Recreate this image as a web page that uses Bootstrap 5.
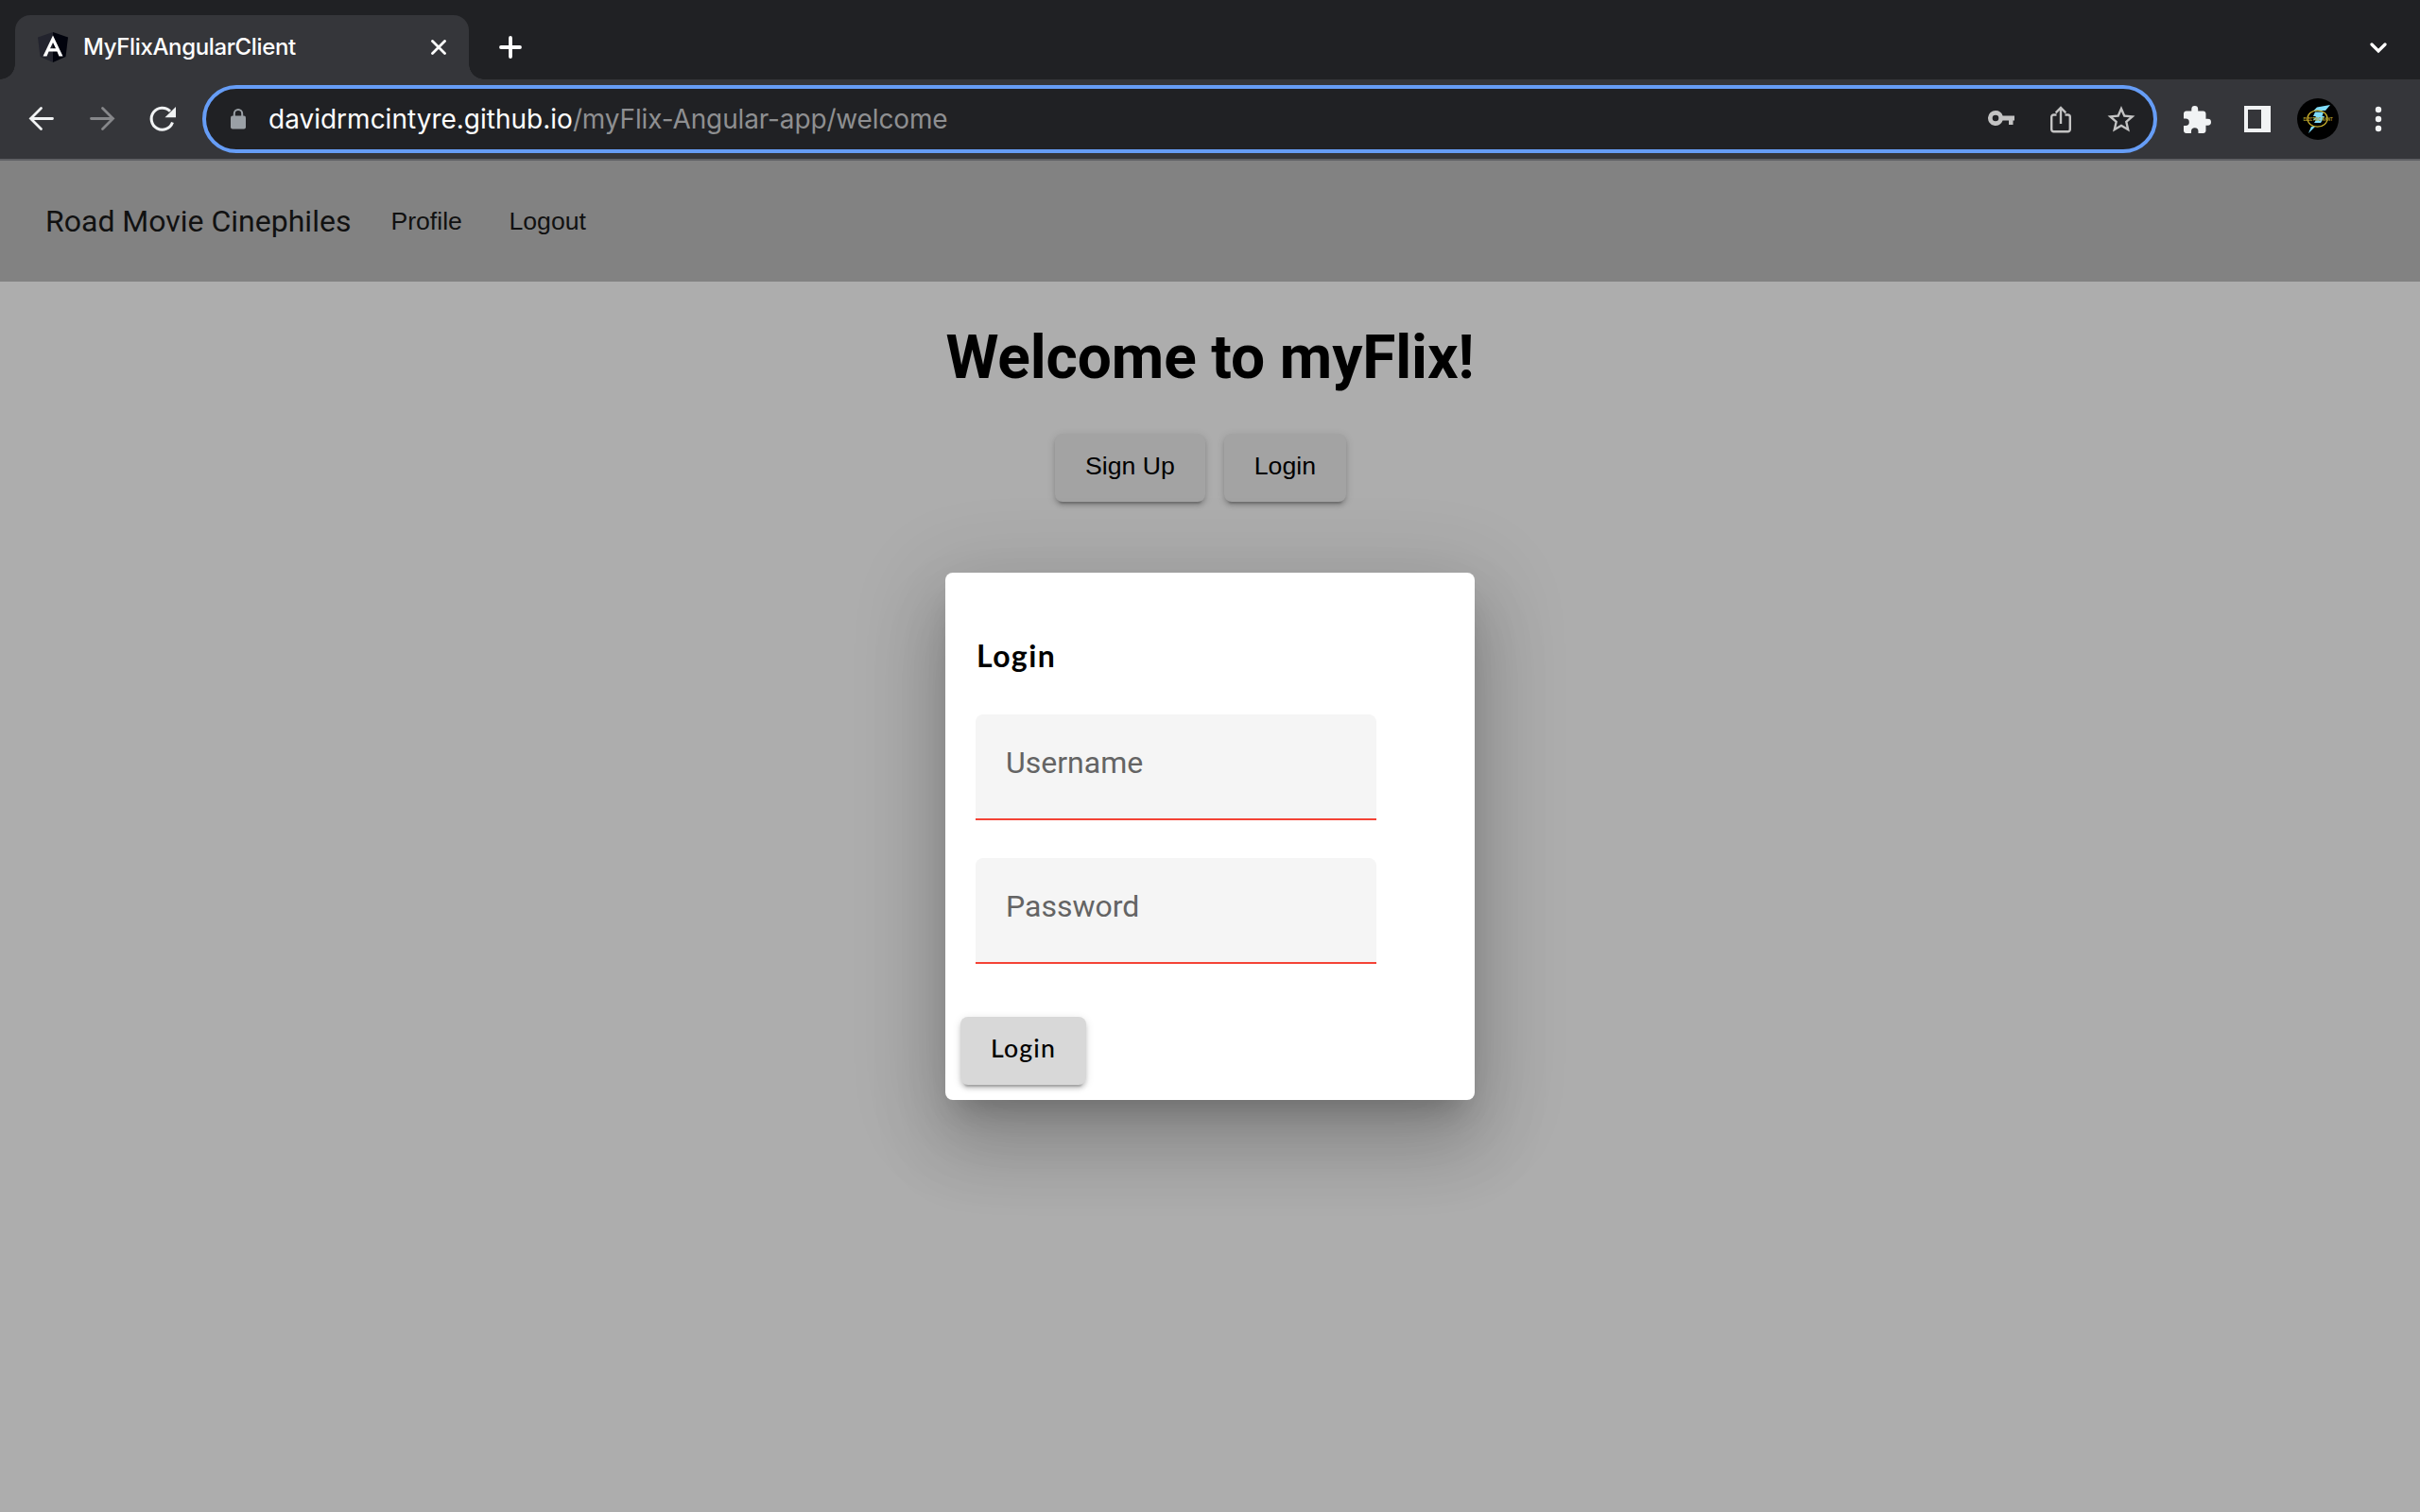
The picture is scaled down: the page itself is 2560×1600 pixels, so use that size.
<!DOCTYPE html>
<html lang="en">
<head>
<meta charset="utf-8">
<title>MyFlixAngularClient</title>
<link href="https://cdn.jsdelivr.net/npm/bootstrap@5.3.0/dist/css/bootstrap.min.css" rel="stylesheet">
<style>
html,body{height:100%}
body{width:2560px;height:1600px;overflow:hidden;background:#adadad;font-family:Roboto,sans-serif;color:#000}
svg{display:block;flex:none}
.tabstrip{height:84px;background:#202124;padding:16px 35px 0 16px}
.tab{width:480px;height:68px;background:#35363a;border-radius:16px 16px 0 0;padding:0 24px;position:relative}
.tab::before,.tab::after{content:"";position:absolute;bottom:0;width:16px;height:16px}
.tab::before{left:-16px;background:radial-gradient(circle at 0 0,transparent 15.5px,#35363a 16px)}
.tab::after{right:-16px;background:radial-gradient(circle at 100% 0,transparent 15.5px,#35363a 16px)}
.tab-title{font:500 24px/32px Inter,sans-serif;letter-spacing:-.36px;color:#fff;margin-left:16px}
.new-tab{margin:22px 0 0 28px}
.toolbar{height:86px;background:#35363a;border-bottom:2px solid #5f6064;padding:0 26px 0 28px}
.nav-icons{gap:32px}
.omnibox{width:2068px;height:72px;border:4px solid #669df6;border-radius:36px;background:#202124;padding:0 19px 0 26px;margin-left:26px}
.omni-icons{gap:35px}
.url{font:400 28px/36px Inter,sans-serif;color:#fff;margin-left:24px}
.url-path{color:#8e8f91;letter-spacing:-.14px}
.puzzle{margin:0 35px 0 28px}
.avatar{margin-left:28px}
.page{height:1430px}
.site-nav{height:128px;background:#828282;padding:0 48px;color:#111}
.brand{font-size:32px;line-height:40px;margin-right:42px}
.nav-btn{font:400 26.67px/32px "Liberation Sans",sans-serif;color:#111;margin-right:49.500px}
.welcome{font-size:64px;font-weight:700;line-height:76px;letter-spacing:-.12px;margin:43px 0 42px}
.actions{gap:20px;padding-right:20px}
.flat-btn{--bs-btn-border-width:0;--bs-btn-border-radius:8px;--bs-btn-color:#000;height:72px;padding:0 32px 4px;font:400 26.67px/68px "Liberation Sans",sans-serif;box-shadow:0 6px 2px -4px rgba(0,0,0,.2),0 4px 4px rgba(0,0,0,.14),0 2px 10px rgba(0,0,0,.12)}
.grey{--bs-btn-bg:#a3a3a3}
.light-grey{--bs-btn-bg:#d8d8d8}
.dialog-card{width:560px;height:558px;border:0;border-radius:8px;padding:0 16px 16px;box-shadow:0 22px 30px -14px rgba(0,0,0,.2),0 48px 76px 6px rgba(0,0,0,.14),0 18px 92px 16px rgba(0,0,0,.12)}
.dialog-title{font:700 32px/40px Lato,sans-serif;letter-spacing:1.4px;margin:68px 16px 42px 17px}
.field{width:424px;height:112px;border:0;border-bottom:2px solid #f44336;border-radius:8px 8px 0 0;background:#f5f5f5!important;padding:0 32px 9px;margin:0 16px 40px;font-size:32px;box-shadow:none!important}
.field::placeholder{color:#646464;opacity:1}
.submit{font-family:Lato,sans-serif;font-weight:500;letter-spacing:1.15px;padding-bottom:6px;line-height:66px}
</style>
</head>
<body>
<header>
  <div class="tabstrip d-flex align-items-start">
    <div class="tab d-flex align-items-center">
      <svg width="32" height="32" viewBox="0 0 32 32"><path fill="#23242e" d="M16 0 0 5.500 2.500 26 16 32z"/><path fill="#01030d" d="M16 0l16 5.500L29.500 26 16 32z"/><path fill="#fff" fill-rule="evenodd" d="M16 3.600 5.500 25.500h4l2.100-5h8.800l2.100 5h4zm0 7.400 3 6.300h-6z"/></svg>
      <span class="tab-title">MyFlixAngularClient</span>
      <svg class="ms-auto" width="16" height="16" viewBox="0 0 16 16" stroke="#fff" stroke-width="2.800" stroke-linecap="round"><path d="M1.500 1.500l13 13M14.500 1.500l-13 13"/></svg>
    </div>
    <svg class="new-tab" width="32" height="24" viewBox="0 0 32 24" stroke="#fff" stroke-width="3.800" stroke-linecap="round"><path d="M6 12h20M16 2v20"/></svg>
    <svg class="ms-auto mt-4" width="18" height="20" viewBox="0 0 18 20" fill="none" stroke="#fff" stroke-width="3.200" stroke-linecap="round"><path d="M2 7l7 7 7-7"/></svg>
  </div>
  <div class="toolbar d-flex align-items-center">
    <div class="nav-icons d-flex align-items-center">
      <svg width="32" height="32" viewBox="0 0 32 32" fill="none" stroke="#f1f3f4" stroke-width="2.800" stroke-linecap="round"><path d="M27.500 15.500h-23M15.500 4.500l-11 11 11 11"/></svg>
      <svg width="32" height="32" viewBox="0 0 32 32" fill="none" stroke="#86878a" stroke-width="2.800" stroke-linecap="round"><path d="M4.500 15.500h23M16.500 4.500l11 11-11 11"/></svg>
      <svg width="32" height="32" viewBox="0 0 32 32"><path d="M26.500 19.500A11.500 11.500 0 1 1 24 7.800" fill="none" stroke="#f1f3f4" stroke-width="3"/><path fill="#f1f3f4" d="M30 3v11.200H18.500z"/></svg>
    </div>
    <div class="omnibox d-flex align-items-center">
      <svg width="16" height="22" viewBox="0 0 16 22"><rect y="7.500" width="16" height="14" rx="2" fill="#9aa0a6"/><path d="M3.800 9V5.200a4.200 4.200 0 0 1 8.400 0V9" fill="none" stroke="#9aa0a6" stroke-width="2"/></svg>
      <span class="url">davidrmcintyre.github.io<span class="url-path">/myFlix-Angular-app/welcome</span></span>
      <div class="omni-icons ms-auto d-flex align-items-center">
        <svg width="28" height="28" viewBox="0 0 28 28" fill="#c3c3c3"><path fill-rule="evenodd" d="M8 5a8 8 0 0 1 7.600 5.500H28v5h-1.500V20H22v-4.500h-6.400A8 8 0 1 1 8 5zm0 4.700a3.300 3.300 0 1 0 0 6.600 3.300 3.300 0 0 0 0-6.600z"/></svg>
        <svg width="28" height="32" viewBox="0 0 28 32" fill="none" stroke="#c3c3c3" stroke-width="2.400"><path d="M9.500 11.500H6.500A2.300 2.300 0 0 0 4.200 13.800V27a2.300 2.300 0 0 0 2.300 2.300h15A2.300 2.300 0 0 0 23.800 27V13.800a2.300 2.300 0 0 0-2.300-2.300h-3M14 21V4M8.700 9.300 14 4l5.300 5.300"/></svg>
        <svg width="30" height="30" viewBox="1.660 1.300 20.700 20.700" fill="#c3c3c3"><path d="M22 9.240l-7.190-.62L12 2 9.190 8.630 2 9.240l5.460 4.730L5.820 21 12 17.270 18.180 21l-1.630-7.030L22 9.240zM12 15.400l-3.760 2.270 1-4.280-3.320-2.880 4.380-.38L12 6.100l1.710 4.040 4.380.38-3.320 2.880 1 4.280L12 15.400z"/></svg>
      </div>
    </div>
    <svg class="puzzle" width="29" height="29" viewBox="2 1 21 21"><path fill="#f1f3f4" d="M20.500 11H19V7c0-1.100-.9-2-2-2h-4V3.500a2.500 2.500 0 0 0-5 0V5H4c-1.100 0-2 .9-2 2v3.800h1.500a2.700 2.700 0 0 1 0 5.400H2V20c0 1.100.9 2 2 2h3.800v-1.500a2.700 2.700 0 0 1 5.400 0V22H17c1.100 0 2-.9 2-2v-4h1.500a2.500 2.500 0 0 0 0-5z"/></svg>
    <svg width="28" height="28"><path fill="#f1f3f4" fill-rule="evenodd" d="M0 0h28v28H0zM4 4v20h14V4z"/></svg>
    <svg class="avatar" width="44" height="44" viewBox="0 0 44 44"><circle cx="22" cy="22" r="22"/><path fill="#7fdcfb" d="M35 7 21 9.500 17.500 13H30zM19 14.500h9L26.500 19H29l-4 7h-7l2-3h-3l3-4h-3zM15 30h4l-7 7z"/><ellipse cx="21.500" cy="21.500" rx="10.500" ry="8.700" fill="none" stroke="#c9b02c" stroke-width="1.300"/><text x="6.500" y="24" font-size="5" font-weight="700" textLength="31" lengthAdjust="spacingAndGlyphs" fill="#a8962a" font-family="Roboto">ELECTRIC RANT</text></svg>
    <svg class="ms-auto" width="36" height="32" fill="#f1f3f4"><circle cx="18" cy="6" r="3.200"/><circle cx="18" cy="16" r="3.200"/><circle cx="18" cy="26" r="3.200"/></svg>
  </div>
</header>
<div class="page position-relative">
  <nav class="site-nav d-flex align-items-center">
    <span class="brand">Road Movie Cinephiles</span>
    <span class="nav-btn">Profile</span>
    <span class="nav-btn">Logout</span>
  </nav>
  <main class="text-center">
    <h1 class="welcome">Welcome to myFlix!</h1>
    <div class="actions d-flex justify-content-center">
      <button type="button" class="btn flat-btn grey">Sign Up</button>
      <button type="button" class="btn flat-btn grey">Login</button>
    </div>
  </main>
  <div class="position-absolute top-0 start-0 w-100 h-100 d-flex align-items-center justify-content-center">
    <form class="card dialog-card">
      <h2 class="dialog-title">Login</h2>
      <input class="form-control field" placeholder="Username">
      <input class="form-control field" type="password" placeholder="Password">
      <button type="button" class="btn flat-btn light-grey submit align-self-start mt-auto">Login</button>
    </form>
  </div>
</div>
<script src="https://cdn.jsdelivr.net/npm/bootstrap@5.3.0/dist/js/bootstrap.bundle.min.js"></script>
</body>
</html>
